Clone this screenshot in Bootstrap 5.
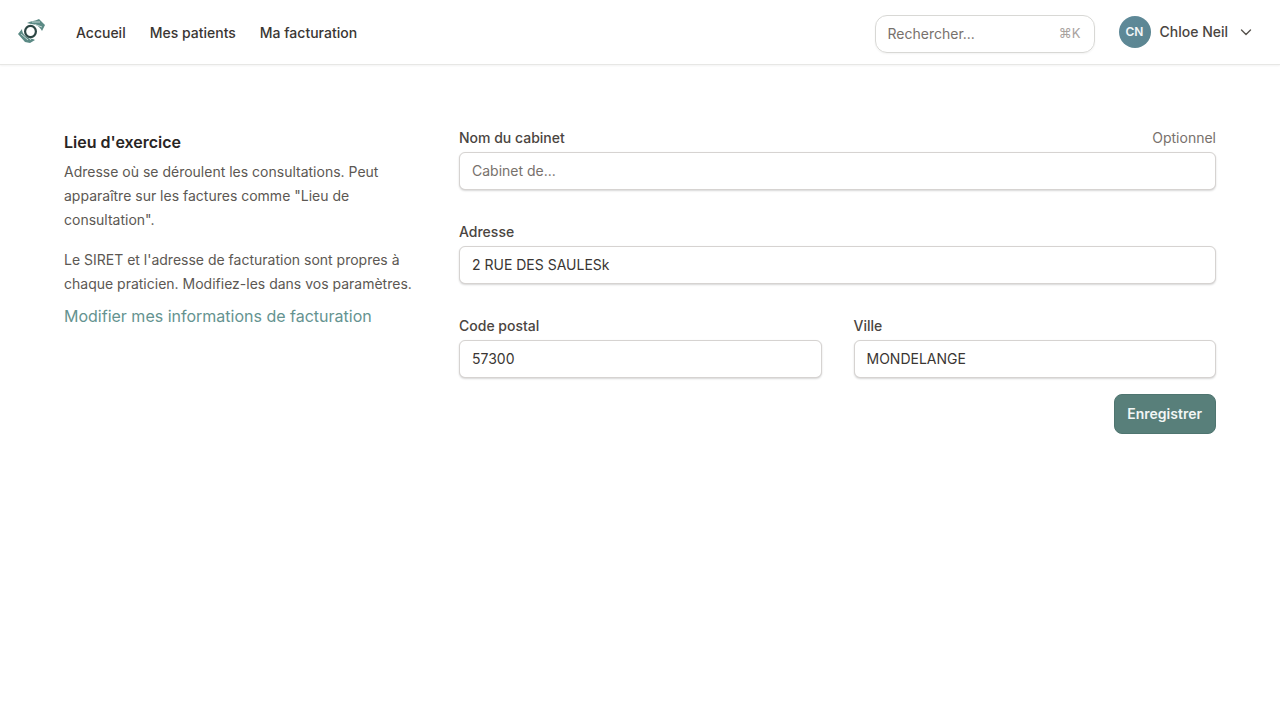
<!DOCTYPE html>
<html lang="fr">
<head>
    <meta charset="UTF-8">
    <meta name="viewport" content="width=device-width, initial-scale=1">
    <title>Lieu d'exercice</title>
    <link rel="stylesheet" href="https://cdn.jsdelivr.net/npm/bootstrap@5.3.0/dist/css/bootstrap.min.css">
    <style>
        body { font-family: Inter, "Liberation Sans", sans-serif; color: #44403c; background: #fff; }
        .topbar { height: 65px; padding: 0 27px 0 18px; border-bottom: 1px solid #e7e7e5; box-shadow: 0 1px 2px rgba(0,0,0,.05); }
        .brand-logo { width: 28px; height: 26px; margin-right: 18px; }
        .menu-link { font-size: 14px; font-weight: 500; color: #3a3633; text-decoration: none; padding: 0 12px; }
        .search-box { width: 220px; height: 38px; border: 1px solid #d8d8d5; border-radius: 12px; padding: 0 13px 0 12px; margin-right: 24px; margin-top: 3px; font-size: 14px; color: #78716c; box-shadow: 0 1px 2px rgba(0,0,0,.05); }
        .search-key { font-size: 13px; color: #a8a29e; }
        .avatar-round { width: 32px; height: 32px; border-radius: 50%; background: linear-gradient(135deg, #5f8a9a, #5b8590); color: #f2f6f7; font-size: 12px; font-weight: 600; margin-top: -1px; }
        .user-name { font-size: 14px; font-weight: 500; color: #4a4541; margin: -1px 11px 0 9px; }
        .page-body { padding: 63px 64px 0; }
        .side-col { width: 395px; flex: none; padding-right: 47px; padding-top: 2px; }
        .side-title { font-size: 16px; font-weight: 600; color: #292524; line-height: 24px; margin-bottom: 6px; }
        .side-text { font-size: 14px; line-height: 24px; color: #5c5853; margin-bottom: 16px; }
        .side-link { font-size: 16px; line-height: 24px; color: #659390; text-decoration: none; display: block; margin-top: -8px; }
        .field-label { font-size: 14px; font-weight: 500; color: #4a4541; line-height: 20px; margin-bottom: 4px; }
        .field-hint { font-size: 14px; color: #78716c; line-height: 20px; }
        .field-input { height: 38px; font-size: 14px; color: #3a3633; border: 1px solid #d6d3d1; border-radius: 6px; padding: 0 12px 2px; box-shadow: 0 1px 2px rgba(0,0,0,.16); }
        .field-input::placeholder { color: #78716c; }
        .field-group { margin-bottom: 32px; }
        .save-btn { height: 40px; padding: 0 13px 2px 12px; font-size: 14px; font-weight: 600; color: #f2f6f5; background: #587f7a; border: 1px solid #4f7570; border-radius: 8px; margin-top: -16px; }
    </style>
</head>
<body>
    <nav class="topbar d-flex align-items-center">
        <svg class="brand-logo" viewBox="0 0 28 26" fill="none">
            <path d="M9 4 C13 2 17 2 21 0 L27 6 L24 12 C22 8 18 5 13 5 Z" fill="#5b8a85"/>
            <path d="M14 3 L22 3 M17 5.500 L24 8" stroke="#dfeae8" stroke-width=".8"/>
            <path d="M0 15 L4 10 C4 15 8 19 15 20 L17 21 L12 24 L7 23 Z" fill="#5b8a85"/>
            <path d="M3 15 L10 21 M6 14.500 L13 21" stroke="#dfeae8" stroke-width=".8"/>
            <ellipse cx="12.500" cy="12.500" rx="5.400" ry="5.700" stroke="#2c4644" stroke-width="2.200"/>
        </svg>
        <a class="menu-link" href="#">Accueil</a>
        <a class="menu-link" href="#">Mes patients</a>
        <a class="menu-link" href="#">Ma facturation</a>
        <div class="search-box d-flex align-items-center justify-content-between ms-auto">
            <span>Rechercher...</span><span class="search-key">⌘K</span>
        </div>
        <div class="avatar-round d-flex align-items-center justify-content-center">CN</div>
        <span class="user-name">Chloe Neil</span>
        <svg width="14" height="14" viewBox="0 0 14 14" fill="none" stroke="#57534e" stroke-width="1.4" stroke-linecap="round" stroke-linejoin="round"><path d="M2.500 5l4.500 4.500L11.500 5"/></svg>
    </nav>

    <main class="page-body d-flex">
        <div class="side-col">
            <h2 class="side-title">Lieu d'exercice</h2>
            <p class="side-text">Adresse où se déroulent les consultations. Peut apparaître sur les factures comme "Lieu de consultation".</p>
            <p class="side-text">Le SIRET et l'adresse de facturation sont propres à chaque praticien. Modifiez-les dans vos paramètres.</p>
            <a class="side-link" href="#">Modifier mes informations de facturation</a>
        </div>
        <form class="flex-grow-1">
            <div class="field-group">
                <div class="d-flex justify-content-between">
                    <label class="field-label" for="nom">Nom du cabinet</label>
                    <span class="field-hint">Optionnel</span>
                </div>
                <input id="nom" class="form-control field-input" placeholder="Cabinet de...">
            </div>
            <div class="field-group">
                <label class="field-label d-block" for="adresse">Adresse</label>
                <input id="adresse" class="form-control field-input" value="2 RUE DES SAULESk">
            </div>
            <div class="row field-group gx-0">
                <div class="col-6 pe-3">
                    <label class="field-label d-block" for="cp">Code postal</label>
                    <input id="cp" class="form-control field-input" value="57300">
                </div>
                <div class="col-6 ps-3">
                    <label class="field-label d-block" for="ville">Ville</label>
                    <input id="ville" class="form-control field-input" value="MONDELANGE">
                </div>
            </div>
            <div class="d-flex justify-content-end">
                <button type="button" class="btn save-btn">Enregistrer</button>
            </div>
        </form>
    </main>
    <script src="https://cdn.jsdelivr.net/npm/bootstrap@5.3.0/dist/js/bootstrap.bundle.min.js"></script>
</body>
</html>
